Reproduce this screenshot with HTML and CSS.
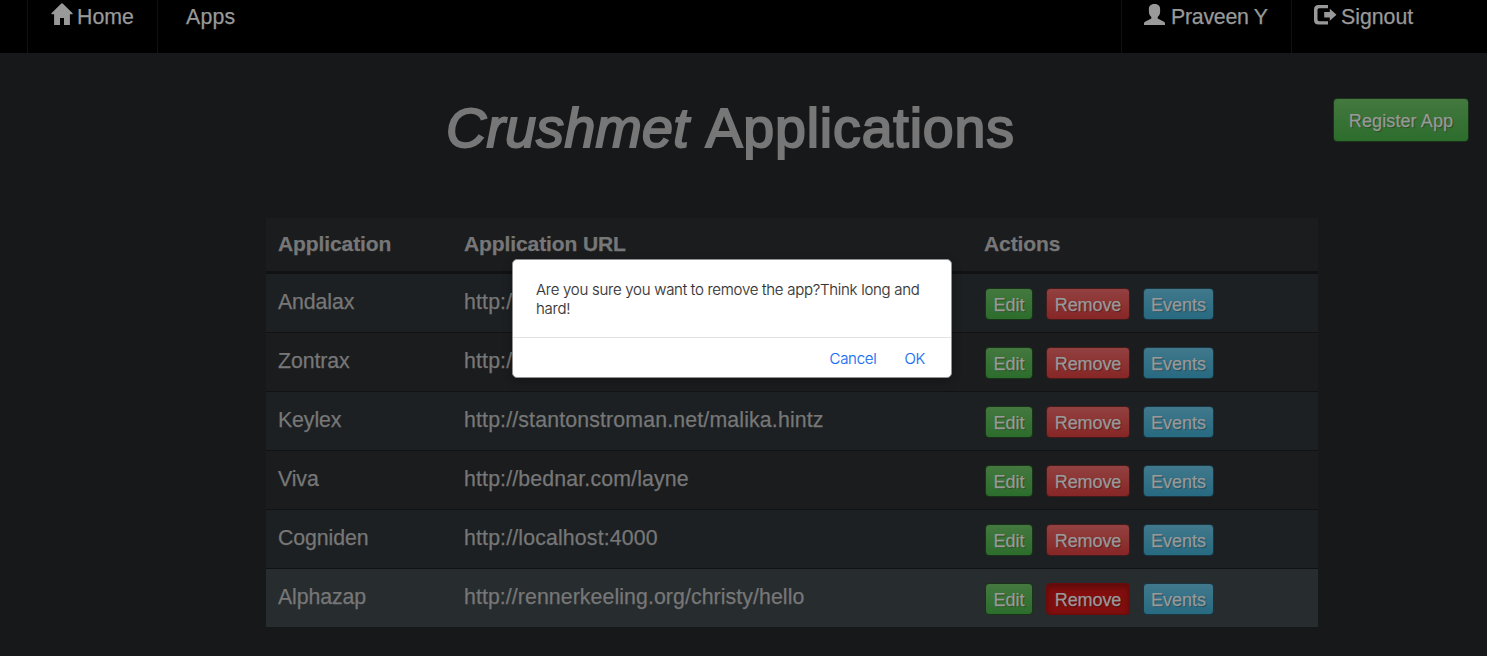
FILE: index.html
```html
<!DOCTYPE html>
<html lang="en">
<head>
<meta charset="utf-8">
<title>Crushmet Applications</title>
<link rel="stylesheet" href="styles.css">
</head>
<body>
<nav class="nav">
  <a class="nav-item nav-home"><svg class="icon-home" viewBox="0 0 22 22"><path d="M9.800.9Q11-.2 12.200.9L21.600 10.300V11.300H18.900V22H13V15H9V22H3.100V11.300H.4V10.300Z"/></svg><span>Home</span></a>
  <a class="nav-item nav-apps"><span>Apps</span></a>
  <a class="nav-item nav-user"><svg class="icon-user" viewBox="0 0 21 21"><path d="M10.500 0C13.800 0 16.100 1.600 16.100 5V8C16.100 10.300 14.900 12 13.700 13V14.600L20 17.800Q21 18.400 21 19.300V21H0V19.300Q0 18.400 1 17.800L7.300 14.600V13C6.100 12 4.900 10.300 4.900 8V5C4.900 1.600 7.200 0 10.500 0Z"/></svg><span>Praveen Y</span></a>
  <a class="nav-item nav-out"><svg class="icon-out" viewBox="0 0 23 20"><path d="M14 0V3.200H5.200Q3.500 3.200 3.500 5V14.500Q3.500 16.300 5.200 16.300H14V19.500H4.500Q0 19.500 0 15V4.500Q0 0 4.500 0Z"/><path d="M15.800 3.800 22.500 9.800 15.800 15.800V12.600H10.200V7H15.800Z"/></svg><span>Signout</span></a>
</nav>
<header class="head">
  <h1 class="title"><em class="brand">Crushmet</em> <span class="title-rest">Applications</span></h1>
  <button class="btn btn-lg green">Register App</button>
</header>
<table class="apps">
  <thead><tr><th class="c-name">Application</th><th class="c-url">Application URL</th><th>Actions</th></tr></thead>
  <tbody>
    <tr><td>Andalax</td><td class="url">http://</td><td class="acts"><div class="actions"><button class="btn green edit">Edit</button><button class="btn red remove">Remove</button><button class="btn blue events">Events</button></div></td></tr>
    <tr><td>Zontrax</td><td class="url">http://</td><td class="acts"><div class="actions"><button class="btn green edit">Edit</button><button class="btn red remove">Remove</button><button class="btn blue events">Events</button></div></td></tr>
    <tr><td>Keylex</td><td class="url">http://stantonstroman.net/malika.hintz</td><td class="acts"><div class="actions"><button class="btn green edit">Edit</button><button class="btn red remove">Remove</button><button class="btn blue events">Events</button></div></td></tr>
    <tr><td>Viva</td><td class="url">http://bednar.com/layne</td><td class="acts"><div class="actions"><button class="btn green edit">Edit</button><button class="btn red remove">Remove</button><button class="btn blue events">Events</button></div></td></tr>
    <tr><td>Cogniden</td><td class="url">http://localhost:4000</td><td class="acts"><div class="actions"><button class="btn green edit">Edit</button><button class="btn red remove">Remove</button><button class="btn blue events">Events</button></div></td></tr>
    <tr class="current"><td>Alphazap</td><td class="url url-last">http://rennerkeeling.org/christy/hello</td><td class="acts"><div class="actions"><button class="btn green edit">Edit</button><button class="btn red remove pressed">Remove</button><button class="btn blue events">Events</button></div></td></tr>
  </tbody>
</table>
<div class="dialog" role="alertdialog">
  <p class="message">Are you sure you want to remove the app?Think long and hard!</p>
  <div class="dialog-actions"><a class="cancel">Cancel</a><a class="ok">OK</a></div>
</div>
</body>
</html>
```

FILE: styles.css
```css
* { box-sizing: border-box; }
body {
  margin: 0;
  height: 656px;
  overflow: hidden;
  position: relative;
  background: #17181a;
  color: #777;
  font: 21.3px/30px "Liberation Sans", Arial, sans-serif;
  -webkit-text-stroke: .25px;
}
.nav {
  display: flex;
  height: 53px;
  padding-left: 27px;
  background: #000;
  color: #999;
  font-size: 21.3px;
}
.nav-item { display: flex; align-items: flex-start; padding-top: 2px; white-space: nowrap; }
.nav-item svg { fill: #999; flex: none; }
.nav-home { width: 131px; padding-left: 23px; border-left: 1px solid #111; border-right: 1px solid #111; }
.nav-apps { padding-left: 28px; letter-spacing: .2px; }
.nav-user { margin-left: auto; width: 170px; padding-left: 22px; border-left: 1px solid #111; letter-spacing: -.25px; }
.nav-out { width: 196px; padding-left: 21px; border-left: 1px solid #111; }
.icon-home { width: 22px; height: 22px; margin: 1px 4px 0 0; }
.icon-user { width: 21px; height: 21px; margin: 2px 6px 0 0; }
.icon-out { width: 23px; height: 20px; margin: 3px 4px 0 1px; }
.head { display: flex; height: 165px; align-items: flex-start; padding: 45px 18px 0 446px; }
.title {
  margin: 0;
  width: 887px;
  font-size: 55.5px;
  line-height: 61px;
  font-weight: 400;
  -webkit-text-stroke: 2px #777;
  white-space: nowrap;
}
.brand { letter-spacing: .3px; }
.title-rest { margin-left: 1px; letter-spacing: .85px; }
.btn {
  font: 18px/20px "Liberation Sans", Arial, sans-serif;
  height: 32px;
  padding: 2px 0 0;
  border: 1px solid;
  border-radius: 4px;
  color: #999;
  text-shadow: 1px 1px 1px rgba(0, 0, 0, .35);
  white-space: nowrap;
  flex: none;
}
.btn-lg { width: 136px; height: 44px; letter-spacing: .1px; }
.green { background: linear-gradient(#44783f, #2c6d2c); border-color: #193219; }
.red { background: linear-gradient(#924141, #872626); border-color: #451a1a; }
.blue { background: linear-gradient(#41788c, #276a81); border-color: #193540; }
.pressed { background: #820e0e; border-color: #6c0b0b; box-shadow: inset 0 3px 6px rgba(0, 0, 0, .3); }
.edit { width: 48px; }
.remove { width: 84px; letter-spacing: -.1px; }
.events { width: 71px; }
.apps { width: 1052px; margin-left: 266px; table-layout: fixed; border-spacing: 0; background: #1b1c1e; }
.apps th { height: 53px; padding: 11px 12px 0; vertical-align: top; text-align: left; font-weight: 700; font-size: 21px; letter-spacing: -.1px; }
.apps .c-name { width: 186px; }
.apps .c-url { width: 520px; }
.apps td { height: 59px; padding: 13px 12px 0; vertical-align: top; border-top: 1px solid #111214; white-space: nowrap; letter-spacing: -.1px; }
.apps tbody tr:first-child td { height: 61px; border-top-width: 3px; }
.apps tbody tr:nth-child(odd) { background: #1c2022; }
.apps tbody .current { background: #272c2f; }
.apps .url { letter-spacing: .15px; }
.apps .url-last { letter-spacing: .08px; }
.apps .acts { padding-top: 14px; padding-left: 13px; }
.actions { display: flex; gap: 13px; }
.dialog {
  position: absolute;
  left: 512px;
  top: 259px;
  width: 440px;
  height: 119px;
  background: #fff;
  border: 1px solid #929292;
  border-radius: 5px;
  box-shadow: 0 2px 10px rgba(0, 0, 0, .3);
  font: 300 15px/19px Inter, sans-serif;
  letter-spacing: -.27px;
  -webkit-text-stroke: .15px;
  color: #333;
}
.message { margin: 0; height: 78px; padding: 20px 20px 0 23px; border-bottom: 1px solid #e2e2e2; }
.dialog-actions { display: flex; justify-content: flex-end; gap: 28px; padding: 11px 26px 0 0; color: #156cf2; }
```
